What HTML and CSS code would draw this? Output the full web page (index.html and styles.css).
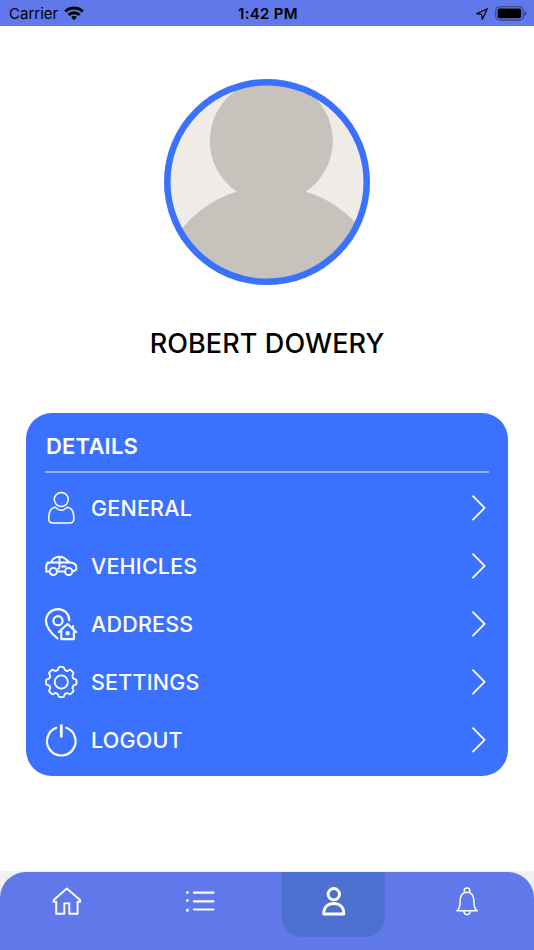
FILE: index.html
```
<!DOCTYPE html>
<html lang="en">
<head>
    <meta charset="UTF-8">
    <title>Profile</title>
    <link rel="stylesheet" href="styles.css">
</head>
<body>
    <header class="status-bar">
        <div class="status-left">
            <span>Carrier</span>
            <svg width="20" height="15" viewBox="0 0 20 15" fill="none" stroke="#000" stroke-width="2.9">
                <path d="M1.2 5.600a12.400 12.400 0 0 1 17.600 0"/>
                <path d="M4.500 9a7.800 7.800 0 0 1 11 0"/>
                <path d="M10 14.200 7.100 11.300a4.100 4.100 0 0 1 5.800 0z" fill="#000" stroke="none"/>
            </svg>
        </div>
        <div class="status-time">1:42 PM</div>
        <div class="status-right">
            <svg width="12" height="12" viewBox="0 0 12 12" fill="none" stroke="#000" stroke-width="1.2" stroke-linejoin="round">
                <path d="M11.300.8.700 5.700l4.900.6.700 4.900z"/>
            </svg>
            <svg width="32" height="15" viewBox="0 0 32 15">
                <rect x=".7" y=".7" width="27.600" height="13.400" rx="4" fill="none" stroke="#000" stroke-opacity=".45" stroke-width="1.1"/>
                <rect x="2.600" y="2.600" width="23.600" height="9.600" rx="2"/>
                <path d="M29.700 5v5q1.600-.8 1.600-2.500T29.700 5z" fill-opacity=".5"/>
            </svg>
        </div>
    </header>

    <main class="profile">
        <div class="avatar">
            <svg width="206" height="206" viewBox="0 0 206 206">
                <circle cx="107.300" cy="61.700" r="61.500" fill="#c7c3bc"/>
                <circle cx="107.300" cy="223" r="115.700" fill="#c7c3bc"/>
                <circle cx="103" cy="103" r="101" fill="none" stroke="#3a71fe" stroke-width="9"/>
            </svg>
        </div>
        <h1>ROBERT DOWERY</h1>

        <section class="card">
            <h2>DETAILS</h2>
            <ul class="menu">
                <li>
                    <svg class="icon" viewBox="0 0 32 32" stroke-width="1.500">
                        <circle cx="16.300" cy="7.500" r="7"/>
                        <path d="M9.800 15.300C5.500 16.200 3.700 20.500 3.700 26.500q0 4.600 4.600 4.600h16q4.600 0 4.600-4.600c0-6-1.800-10.300-6.100-11.200-1.500-.2-2.600 3-6.500 3s-5-3.200-6.500-3z"/>
                    </svg>
                    <span>GENERAL</span>
                    <svg class="chevron" viewBox="0 0 14 26"><path d="m1 1.200 11.600 11.700L1 24.600"/></svg>
                </li>
                <li>
                    <svg class="icon" viewBox="0 0 32 32" stroke-width="1.900">
                        <circle cx="8.300" cy="21.500" r="3.600"/>
                        <circle cx="23.700" cy="21.500" r="3.600"/>
                        <path d="M4.600 21.500H1M1.300 19.500v-3.800q0-2.400 2.800-2.900l1.800-.5Q8.500 6.700 14.500 6.700q4.900 0 9.500 5.500c5 .5 7.300 2 7.300 4.800v1.500q0 2.500-3.800 2.700M12 21.500h8M2.500 12.500H24M14.500 7v9.500q0 1.700-1.300 2.500M17 16.500h3.500"/>
                    </svg>
                    <span>VEHICLES</span>
                    <svg class="chevron" viewBox="0 0 14 26"><path d="m1 1.200 11.600 11.700L1 24.600"/></svg>
                </li>
                <li>
                    <svg class="icon" viewBox="0 0 32 32" stroke-width="2.100">
                        <circle cx="13" cy="12.700" r="4.600"/>
                        <path d="M24.300 12.500C24.300 6 19.400 1.100 13 1.100S1 6.200 1 12.700C1 19 6.500 25.500 12.500 30.500"/>
                        <path d="m13.800 24 8.700-8 8.700 8M16.300 22.500v8.600h12.600v-8.600M28 18v2.500"/>
                        <path d="M21.700 24.300h1.800v1.800h-1.800z"/>
                    </svg>
                    <span>ADDRESS</span>
                    <svg class="chevron" viewBox="0 0 14 26"><path d="m1 1.200 11.600 11.700L1 24.600"/></svg>
                </li>
                <li>
                    <svg class="icon" viewBox="-16.300 -16 32 32" stroke-width="1.800">
                        <defs>
                            <path id="tooth" d="M-4-11.800Q-3-12.300-2.900-13.800-2.800-15.200-1.400-15.200H1.400Q2.800-15.200 2.900-13.800 3-12.300 4-11.800L5.500-11.170"/>
                        </defs>
                        <circle r="6.600"/>
                        <use href="#tooth"/>
                        <use href="#tooth" transform="rotate(45)"/>
                        <use href="#tooth" transform="rotate(90)"/>
                        <use href="#tooth" transform="rotate(135)"/>
                        <use href="#tooth" transform="rotate(180)"/>
                        <use href="#tooth" transform="rotate(225)"/>
                        <use href="#tooth" transform="rotate(270)"/>
                        <use href="#tooth" transform="rotate(315)"/>
                    </svg>
                    <span>SETTINGS</span>
                    <svg class="chevron" viewBox="0 0 14 26"><path d="m1 1.200 11.600 11.700L1 24.600"/></svg>
                </li>
                <li>
                    <svg class="icon" viewBox="0 0 32 32" stroke-width="2.200">
                        <path d="M11.300 3.800a14.300 14.300 0 1 0 10 0"/>
                        <path d="M16.300 1.500v11" stroke-width="2.700"/>
                    </svg>
                    <span>LOGOUT</span>
                    <svg class="chevron" viewBox="0 0 14 26"><path d="m1 1.200 11.600 11.700L1 24.600"/></svg>
                </li>
            </ul>
        </section>
    </main>

    <div class="tab-wrap">
        <nav class="tab-bar">
            <div class="tab">
                <svg width="30" height="30" viewBox="0 0 30 30" stroke-width="1.900">
                    <path d="M14.800 2.500 1.700 14v1.700h2.500v12h8.100V17.400h5v10.300h8.300v-12h2.500V14z"/>
                </svg>
            </div>
            <div class="tab">
                <svg width="30" height="30" viewBox="0 0 30 30" stroke-width="2.200">
                    <path d="M9 6.700h19.500M9 15.400h19.500M9 23.500h19.500"/>
                    <path d="M2.400 6.400v.2M2.400 14.400v.2M2.400 24.200v.2" stroke-width="2.800"/>
                </svg>
            </div>
            <div class="tab active">
                <svg width="30" height="30" viewBox="0 0 30 30" stroke-width="2.800">
                    <circle cx="14.800" cy="8.200" r="5.700"/>
                    <path d="M4.700 28C4.700 21 9.100 17.500 14.800 17.500S24.900 21 24.900 28z"/>
                </svg>
            </div>
            <div class="tab">
                <svg width="30" height="30" viewBox="0 0 30 30" stroke-width="1.500">
                    <path d="M12.300 6V4.200q0-2.200 2.700-2.200t2.700 2.200V6"/>
                    <path d="M4.800 24.800q3.300-2.200 3.300-9.300c0-6 2.600-9.300 6.900-9.300s6.900 3.300 6.900 9.300q0 7.100 3.300 9.300z"/>
                    <path d="M11.800 25q.3 3.700 3.200 3.700t3.200-3.700"/>
                </svg>
            </div>
        </nav>
    </div>
</body>
</html>
```

FILE: styles.css
```
* {
    box-sizing: border-box;
}
body {
    margin: 0;
    height: 950px;
    display: flex;
    flex-direction: column;
    background-color: #fff;
    font-family: Inter, "Liberation Sans", sans-serif;
    overflow: hidden;
}
.status-bar {
    height: 26px;
    padding: 1px 7px 0 9px;
    display: grid;
    grid-template-columns: 1fr auto 1fr;
    align-items: center;
    background-color: #6078ea;
    font-size: 15px;
    color: #000;
}
.status-left, .status-right {
    display: flex;
    align-items: center;
    gap: 6px;
}
.status-right {
    justify-content: flex-end;
    gap: 7px;
}
.status-time {
    font-weight: 600;
    letter-spacing: 0.3px;
}
.profile {
    flex: 1;
    display: flex;
    flex-direction: column;
    align-items: center;
    padding: 53px 26px 0;
}
.avatar {
    width: 206px;
    height: 206px;
    border-radius: 50%;
    background-color: #efece7;
    overflow: hidden;
}
.avatar svg {
    display: block;
}
h1 {
    margin: 39px 0 0;
    font-size: 27px;
    line-height: 40px;
    font-weight: 500;
    letter-spacing: 0.1px;
}
.card {
    width: 482px;
    height: 362.5px;
    margin-top: 49px;
    padding: 12px 19px 0;
    border-radius: 26px;
    background-color: #3a71fe;
    color: #fff;
}
h2 {
    margin: 0;
    height: 48px;
    padding-left: 1px;
    font-size: 22px;
    line-height: 42px;
    font-weight: 600;
    letter-spacing: 0.2px;
    border-bottom: 2px solid #94b2ff;
}
.menu {
    list-style: none;
    margin: 0;
    padding: 6px 0 0;
}
.menu li {
    height: 58px;
    display: flex;
    align-items: center;
    padding-right: 3px;
}
.menu span {
    flex: 1;
    margin-left: 14px;
    font-size: 21.5px;
    font-weight: 500;
    letter-spacing: 0.2px;
}
.icon, .chevron, .tab svg {
    fill: none;
    stroke: #fff;
    stroke-linecap: round;
    stroke-linejoin: round;
}
.icon {
    width: 32px;
    height: 32px;
    overflow: visible;
}
.chevron {
    width: 14px;
    height: 26px;
    stroke-width: 1.8;
}
.tab-wrap {
    padding-top: 1px;
    background-color: #f1f1f1;
}
.tab-bar {
    height: 78px;
    display: grid;
    grid-template-columns: repeat(4, 1fr);
    justify-items: center;
    background-color: #6078ea;
    border-radius: 26px 26px 0 0;
}
.tab {
    width: 103px;
    height: 65px;
    padding-top: 14px;
    text-align: center;
}
.tab.active {
    background-color: #4e70d0;
    border-radius: 0 0 20px 20px;
}
```
